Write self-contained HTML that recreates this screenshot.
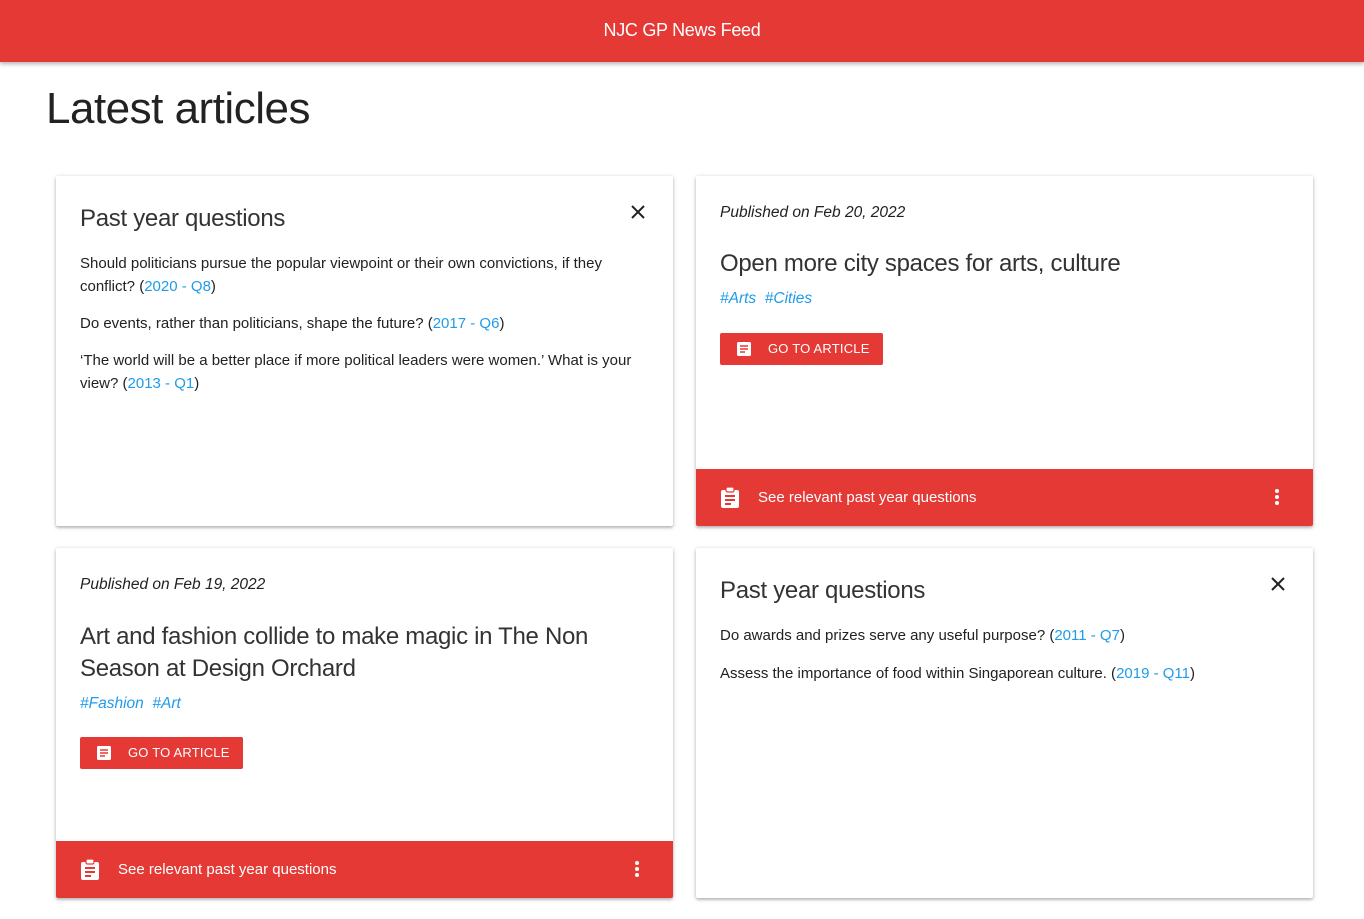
<!DOCTYPE html>
<html><head><meta charset="utf-8"><style>
*{box-sizing:border-box;margin:0;padding:0}
body{width:1364px;height:919px;overflow:hidden;background:#fff;font-family:"Liberation Sans",sans-serif;color:#212121;position:relative}
.bar{position:absolute;left:0;top:0;width:1364px;height:62px;background:#e53935;box-shadow:0 2px 4px rgba(0,0,0,.3);color:#fff;font-size:18px;text-align:center;line-height:60px;letter-spacing:-.3px}
h1{position:absolute;left:46px;top:84px;font-size:44px;font-weight:normal;letter-spacing:-.5px;color:#222}
.card{position:absolute;width:617px;height:350px;background:#fff;box-shadow:0 1px 4px rgba(0,0,0,.25),0 2px 2px rgba(0,0,0,.12);border-radius:2px;overflow:hidden}
.t{position:absolute;left:24px;font-size:24px;font-weight:300;color:#333;letter-spacing:-.3px;white-space:nowrap}
.q{position:absolute;left:24px;font-size:15px;line-height:23px;letter-spacing:0;white-space:nowrap}
a{color:#1e9be9;text-decoration:none}
.x{position:absolute;right:28px;top:29px}
.pub{position:absolute;left:24px;top:28px;font-style:italic;font-size:15.5px;letter-spacing:0}
.tags{position:absolute;left:24px;font-style:italic;font-size:15.5px;color:#1e9be9;letter-spacing:0}
.btn{position:absolute;left:24px;width:163px;height:32px;background:#e53935;border-radius:2px;color:#fff;font-size:13px;line-height:32px;padding-left:48px;letter-spacing:.2px}
.btn svg{position:absolute;left:17px;top:9px}
.foot{position:absolute;left:0;bottom:0;width:617px;height:57px;background:#e53935;color:#fff;font-size:15px;line-height:57px;padding-left:62px;letter-spacing:0}
.foot .ic{position:absolute;left:25px;top:18px}
.foot .dots{position:absolute;right:34px;top:20px}
</style></head><body>
<div class="bar">NJC GP News Feed</div>
<h1>Latest articles</h1>

<div class="card" style="left:56px;top:176px">
<div class="t" style="top:29px">Past year questions</div>
<svg class="x" width="14" height="14" viewBox="0 0 14 14"><path d="M1 1L13 13M13 1L1 13" stroke="#222" stroke-width="2"/></svg>
<div class="q" style="top:76px">Should politicians pursue the popular viewpoint or their own convictions, if they<br>conflict? (<a>2020 - Q8</a>)</div>
<div class="q" style="top:136px">Do events, rather than politicians, shape the future? (<a>2017 - Q6</a>)</div>
<div class="q" style="top:173px">‘The world will be a better place if more political leaders were women.’ What is your<br>view? (<a>2013 - Q1</a>)</div>
</div>

<div class="card" style="left:696px;top:176px">
<div class="pub">Published on Feb 20, 2022</div>
<div class="t" style="top:74px">Open more city spaces for arts, culture</div>
<div class="tags" style="top:114px">#Arts &nbsp;#Cities</div>
<div class="btn" style="top:157px"><svg width="14" height="14" viewBox="0 0 14 14"><rect width="14" height="14" rx="1.5" fill="#fff"/><path d="M3 4h8M3 7h8M3 10h5" stroke="#e53935" stroke-width="1.6"/></svg>GO TO ARTICLE</div>
<div class="foot"><svg class="ic" width="18" height="21" viewBox="0 0 18 21"><rect x="0" y="3" width="18" height="18" rx="2" fill="#fff"/><rect x="5" y="0" width="8" height="5" rx="1.5" fill="#fff" stroke="#e53935" stroke-width="1.2"/><path d="M4 9h10M4 13h10M4 17h6" stroke="#e53935" stroke-width="2"/></svg>See relevant past year questions<svg class="dots" width="4" height="16" viewBox="0 0 4 16"><circle cx="2" cy="2" r="2" fill="#fff"/><circle cx="2" cy="8" r="2" fill="#fff"/><circle cx="2" cy="14" r="2" fill="#fff"/></svg></div>
</div>

<div class="card" style="left:56px;top:548px">
<div class="pub">Published on Feb 19, 2022</div>
<div class="t" style="top:73px;line-height:32px">Art and fashion collide to make magic in The Non<br>Season at Design Orchard</div>
<div class="tags" style="top:147px">#Fashion &nbsp;#Art</div>
<div class="btn" style="top:189px"><svg width="14" height="14" viewBox="0 0 14 14"><rect width="14" height="14" rx="1.5" fill="#fff"/><path d="M3 4h8M3 7h8M3 10h5" stroke="#e53935" stroke-width="1.6"/></svg>GO TO ARTICLE</div>
<div class="foot"><svg class="ic" width="18" height="21" viewBox="0 0 18 21"><rect x="0" y="3" width="18" height="18" rx="2" fill="#fff"/><rect x="5" y="0" width="8" height="5" rx="1.5" fill="#fff" stroke="#e53935" stroke-width="1.2"/><path d="M4 9h10M4 13h10M4 17h6" stroke="#e53935" stroke-width="2"/></svg>See relevant past year questions<svg class="dots" width="4" height="16" viewBox="0 0 4 16"><circle cx="2" cy="2" r="2" fill="#fff"/><circle cx="2" cy="8" r="2" fill="#fff"/><circle cx="2" cy="14" r="2" fill="#fff"/></svg></div>
</div>

<div class="card" style="left:696px;top:548px">
<div class="t" style="top:29px">Past year questions</div>
<svg class="x" width="14" height="14" viewBox="0 0 14 14"><path d="M1 1L13 13M13 1L1 13" stroke="#222" stroke-width="2"/></svg>
<div class="q" style="top:76px">Do awards and prizes serve any useful purpose? (<a>2011 - Q7</a>)</div>
<div class="q" style="top:114px">Assess the importance of food within Singaporean culture. (<a>2019 - Q11</a>)</div>
</div>
</body></html>
